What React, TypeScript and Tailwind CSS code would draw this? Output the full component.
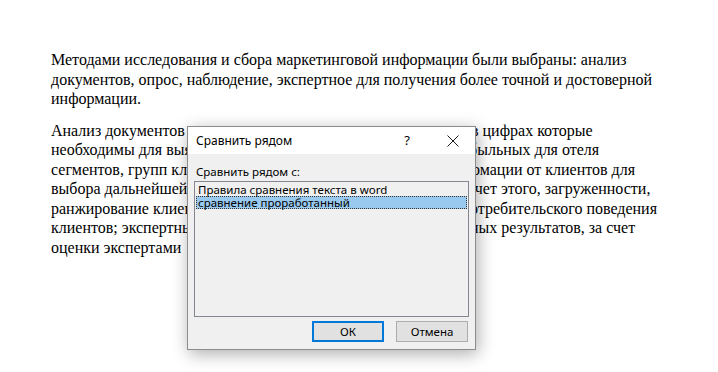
import React from 'react';

const serif = "font-['Liberation_Serif','Times_New_Roman',serif]";
const ui = "font-['Noto_Sans','Segoe_UI',sans-serif]";

interface SplitLine {
  head: string;
  tail: string;
  tailOffset: string;
}

// Lines of the second paragraph: the middle part is covered by the dialog
const coveredLines: SplitLine[] = [
  { head: 'Анализ документов позволил', tail: 'в цифрах которые', tailOffset: 'ml-[284px]' },
  { head: 'необходимы для выявления', tail: 'быльных для отеля', tailOffset: 'ml-[282px]' },
  { head: 'сегментов, групп клиентов', tail: 'омации от клиентов для', tailOffset: 'ml-[285px]' },
  { head: 'выбора дальнейшей стратегии', tail: 'счет этого, загруженности,', tailOffset: 'ml-[281px]' },
  { head: 'ранжирование клиентов', tail: 'отребительского поведения', tailOffset: 'ml-[283px]' },
  { head: 'клиентов; экспертный метод', tail: 'ных результатов, за счет', tailOffset: 'ml-[283px]' },
];

function CloseGlyph() {
  return (
    <svg width="12" height="12" viewBox="0 0 12 12" fill="none">
      <path d="M0.5 0.5 L11.5 11.5 M11.5 0.5 L0.5 11.5" stroke="#1a1a1a" strokeWidth="1" />
    </svg>
  );
}

function CompareDialog() {
  return (
    <div
      className={`absolute left-[187px] top-[126px] flex h-[224px] w-[289px] flex-col border border-[#8c8c8c] bg-[#f0f0f0] shadow-[2px_4px_16px_rgba(0,0,0,0.32)] ${ui} text-[11.5px] text-black`}
    >
      <div className="flex h-[27px] shrink-0 items-center bg-white pl-[8px]">
        <span className="flex-1 pt-[1px] text-[12px] leading-none">Сравнить рядом</span>
        <span className="w-[46px] text-center text-[13px] leading-none">?</span>
        <span className="flex w-[45px] items-center justify-center">
          <CloseGlyph />
        </span>
      </div>
      <div className="flex flex-1 flex-col px-[6px] pt-[10px]">
        <p className="pl-[2px] leading-[16px]">Сравнить рядом с:</p>
        <div className="mt-[1px] h-[136px] border border-[#828790] bg-[#f0f0f0] p-[1px]">
          <div className="pl-[2px] leading-[13px]">Правила сравнения текста в word</div>
          <div className="border border-dotted border-[#333] bg-[#99c9ef] pl-[1px] leading-[11px]">
            сравнение проработанный
          </div>
        </div>
        <div className="mt-[4px] flex justify-end gap-[12px] pr-[1px]">
          <button
            type="button"
            className="h-[21px] w-[72px] border-2 border-[#0078d7] bg-[#e1e1e1] text-[11.5px] leading-none"
          >
            ОК
          </button>
          <button
            type="button"
            className="h-[21px] w-[72px] border border-[#adadad] bg-[#e1e1e1] text-[11.5px] leading-none"
          >
            Отмена
          </button>
        </div>
      </div>
    </div>
  );
}

export default function App() {
  return (
    <div className={`relative h-[372px] w-[718px] overflow-hidden bg-white pl-[51px] pt-[50px] ${serif} text-[16px] leading-[19.5px] text-black`}>
      <div className="mb-[12px]">
        <div className="whitespace-nowrap">Методами исследования и сбора маркетинговой информации были выбраны: анализ</div>
        <div className="whitespace-nowrap">документов, опрос, наблюдение, экспертное для получения более точной и достоверной</div>
        <div className="whitespace-nowrap">информации.</div>
      </div>
      <div>
        {coveredLines.map(line => (
          <div key={line.tail} className="flex whitespace-nowrap">
            <span className="w-[136px] shrink-0 overflow-hidden">{line.head}</span>
            <span className={line.tailOffset}>{line.tail}</span>
          </div>
        ))}
        <div className="whitespace-nowrap">оценки экспертами</div>
      </div>
      <CompareDialog />
    </div>
  );
}
